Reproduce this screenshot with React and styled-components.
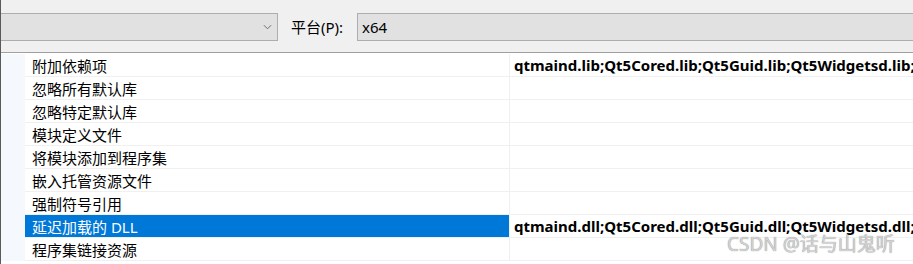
import React from "react";
import styled, { createGlobalStyle } from "styled-components";

const GlobalStyle = createGlobalStyle`
  html, body {
    margin: 0;
    padding: 0;
    background: #ffffff;
  }
  body {
    font-family: "Noto Sans", "Noto Sans CJK SC", sans-serif;
  }
`;

const rows = [
  { name: "附加依赖项", value: "qtmaind.lib;Qt5Cored.lib;Qt5Guid.lib;Qt5Widgetsd.lib;" },
  { name: "忽略所有默认库" },
  { name: "忽略特定默认库" },
  { name: "模块定义文件" },
  { name: "将模块添加到程序集" },
  { name: "嵌入托管资源文件" },
  { name: "强制符号引用" },
  { name: "延迟加载的 DLL", value: "qtmaind.dll;Qt5Cored.dll;Qt5Guid.dll;Qt5Widgetsd.dll;", selected: true },
  { name: "程序集链接资源" },
];

export default function App() {
  return (
    <>
      <GlobalStyle />
      <Page>
        <Toolbar>
          <Combo $width="277px" $noLeft>
            <Chevron viewBox="0 0 10 6">
              <polyline points="1,1 5,5 9,1" />
            </Chevron>
          </Combo>
          <Label>平台(P):</Label>
          <Combo $grow $noRight>
            <ComboText>x64</ComboText>
          </Combo>
        </Toolbar>

        <Grid>
          {rows.map((row) => (
            <Row key={row.name}>
              <Gutter />
              <NameCell $selected={row.selected}>{row.name}</NameCell>
              <ValueCell>{row.value}</ValueCell>
            </Row>
          ))}
          <Watermark>CSDN @话与山鬼听</Watermark>
        </Grid>
      </Page>
    </>
  );
}

const Page = styled.div`
  width: 913px;
  height: 264px;
  overflow: hidden;
  box-sizing: border-box;
  border-left: 1px solid #5a5a5a;
  background: #ffffff;
`;

const Toolbar = styled.div`
  height: 53px;
  box-sizing: border-box;
  display: flex;
  align-items: center;
  background: #f0f0f0;
  border-bottom: 1px solid #a0a0a0;
  padding-top: 1px;
`;

const Combo = styled.div`
  height: 28px;
  box-sizing: border-box;
  width: ${(p) => p.$width || "auto"};
  flex: ${(p) => (p.$grow ? "1" : "none")};
  display: flex;
  align-items: center;
  justify-content: ${(p) => (p.$grow ? "flex-start" : "flex-end")};
  background: #e1e1e1;
  border: 1px solid #adadad;
  border-left: ${(p) => (p.$noLeft ? "none" : "1px solid #adadad")};
  border-right: ${(p) => (p.$noRight ? "none" : "1px solid #adadad")};
`;

const Chevron = styled.svg`
  width: 9px;
  height: 6px;
  margin-right: 5px;
  fill: none;
  stroke: #606060;
  stroke-width: 1;
`;

const Label = styled.div`
  margin: 0 14px 0 13px;
  font-size: 15px;
  color: #000000;
  white-space: nowrap;
`;

const ComboText = styled.span`
  padding-left: 4px;
  font-size: 15px;
  color: #000000;
`;

const Grid = styled.div`
  position: relative;
  padding-top: 1px;
  background: #ffffff;
`;

const Row = styled.div`
  display: grid;
  grid-template-columns: 24px 485px 1fr;
  height: 23px;
  box-sizing: border-box;
  border-bottom: 1px solid #f0f0f0;
`;

const Gutter = styled.div`
  background: #f5f9fd;
  margin-bottom: -1px;
`;

const NameCell = styled.div`
  display: flex;
  align-items: center;
  padding-left: 7px;
  font-size: 15px;
  white-space: nowrap;
  color: ${(p) => (p.$selected ? "#ffffff" : "#000000")};
  background: ${(p) => (p.$selected ? "#0078d7" : "transparent")};
  border-right: 1px solid #f0f0f0;
`;

const ValueCell = styled.div`
  display: flex;
  align-items: center;
  padding-left: 4px;
  font-size: 15px;
  font-weight: 700;
  color: #000000;
  white-space: nowrap;
  overflow: hidden;
`;

const Watermark = styled.div`
  position: absolute;
  left: 726px;
  top: 176px;
  font-size: 19px;
  color: #d2d2d2;
  text-shadow: 0 0 1px #7a7a7a;
  white-space: nowrap;
  font-family: "Noto Sans", "Noto Sans CJK SC", sans-serif;
`;
